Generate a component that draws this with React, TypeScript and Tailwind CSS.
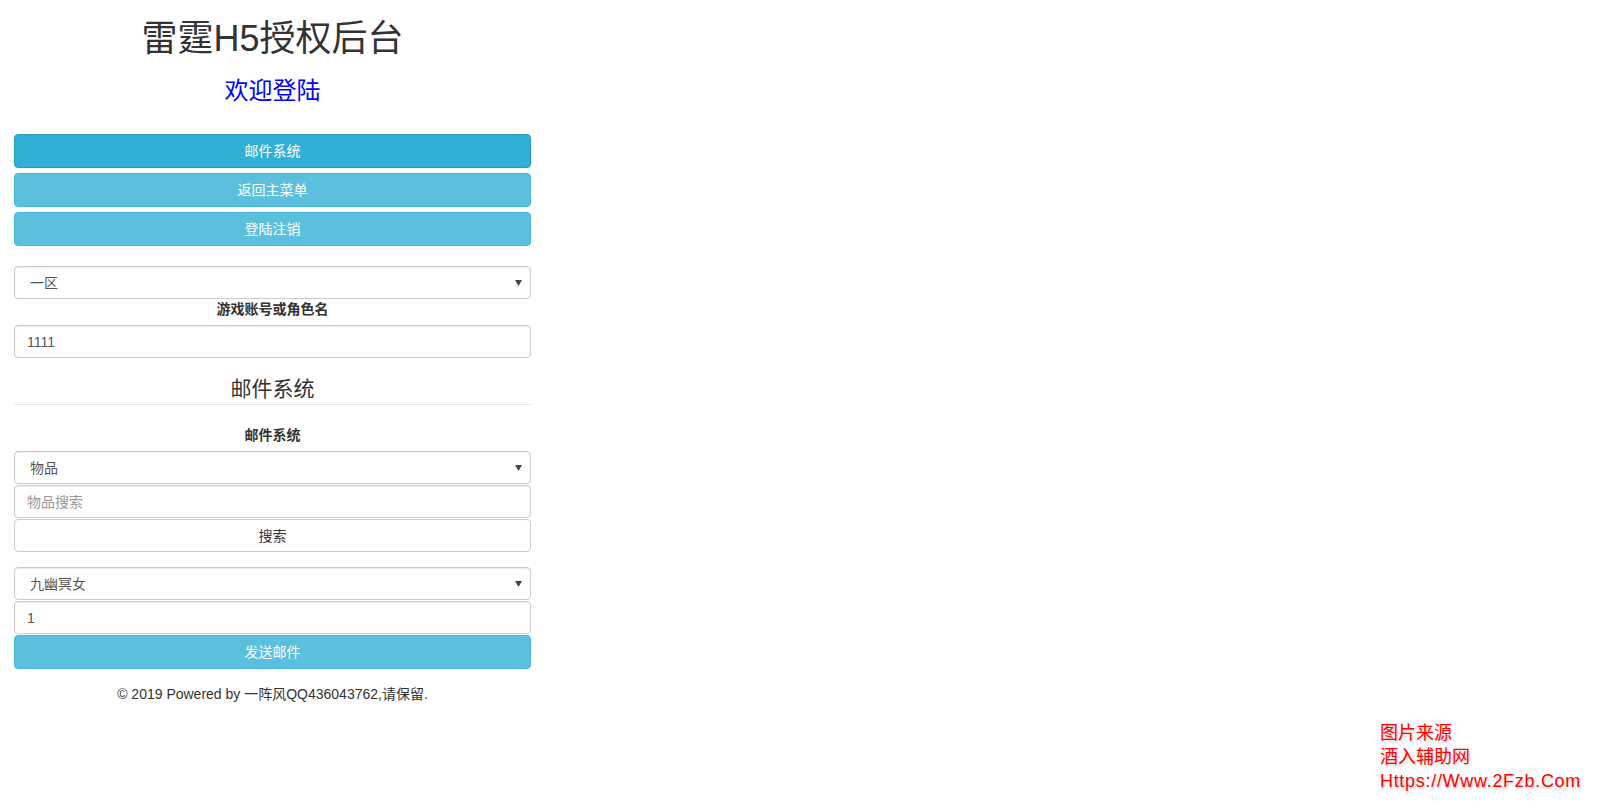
import React from "react";

const font = "font-['Liberation_Sans','Noto_Sans_CJK_SC',sans-serif]";

function Caret() {
  return (
    <svg
      className="pointer-events-none absolute right-[9px] top-1/2 -translate-y-1/2"
      width="7"
      height="6"
      viewBox="0 0 7 6"
    >
      <path d="M0 0 L7 0 L3.5 6 Z" fill="#444" />
    </svg>
  );
}

function Select(props: { value: string; className?: string }) {
  return (
    <div className={"relative " + (props.className ?? "")}>
      <select
        defaultValue={props.value}
        className={`${font} block h-[33px] w-full appearance-none rounded border border-[#ccc] bg-white pl-[15px] text-[14px] leading-[20px] text-[#555] shadow-[inset_0_1px_1px_rgba(0,0,0,0.075)] outline-none`}
      >
        <option>{props.value}</option>
      </select>
      <Caret />
    </div>
  );
}

function Input(props: { value?: string; placeholder?: string; className?: string }) {
  return (
    <input
      defaultValue={props.value}
      placeholder={props.placeholder}
      className={`${font} block h-[33px] w-full rounded border border-[#ccc] bg-white px-3 text-[14px] leading-[20px] text-[#555] placeholder:text-[#999] shadow-[inset_0_1px_1px_rgba(0,0,0,0.075)] outline-none ${props.className ?? ""}`}
    />
  );
}

function InfoButton(props: { label: string; active?: boolean; className?: string }) {
  const colors = props.active
    ? "bg-[#31b0d5] border-[#269abc]"
    : "bg-[#5bc0de] border-[#46b8da]";
  return (
    <button
      className={`${font} block h-[34px] w-full rounded border text-center text-[14px] leading-[20px] text-white ${colors} ${props.className ?? ""}`}
    >
      {props.label}
    </button>
  );
}

export default function App() {
  return (
    <div className={`${font} relative min-h-[807px] w-full bg-white text-[#333]`}>
      <div className="pl-[14px]">
        <div className="flex w-[517px] flex-col">
          <h1 className="mt-[19px] text-center text-[36px] leading-[40px] text-[#333]">
            雷霆H5授权后台
          </h1>
          <h3 className="mt-[19px] text-center text-[24px] leading-[26px] text-[#0000ff]">
            欢迎登陆
          </h3>

          <div className="mt-[30px] flex flex-col gap-[5px]">
            <InfoButton label="邮件系统" active />
            <InfoButton label="返回主菜单" />
            <InfoButton label="登陆注销" />
          </div>

          <Select value="一区" className="mt-[20px]" />
          <div className="h-[20px] text-center text-[14px] font-bold leading-[20px] text-[#333]">
            游戏账号或角色名
          </div>
          <Input value="1111" className="mt-[6px]" />

          <div className="mt-[16px] border-b border-[#e5e5e5] text-center text-[21px] leading-[30px] text-[#333]">
            邮件系统
          </div>

          <div className="mt-[20px] h-[20px] text-center text-[14px] font-bold leading-[20px] text-[#333]">
            邮件系统
          </div>
          <div className="mt-[6px] flex flex-col gap-px">
            <Select value="物品" />
            <Input placeholder="物品搜索" />
            <button className="block h-[33px] w-full rounded border border-[#ccc] bg-white text-center text-[14px] leading-[20px] text-[#333]">
              搜索
            </button>
          </div>

          <div className="mt-[15px] flex flex-col gap-px">
            <Select value="九幽冥女" />
            <Input value="1" />
            <InfoButton label="发送邮件" />
          </div>

          <p className="mt-[15px] text-center text-[14px] leading-[20px] text-[#333]">
            © 2019 Powered by 一阵风QQ436043762,请保留.
          </p>
        </div>
      </div>

      <div className="absolute bottom-[14px] right-[19px] flex flex-col text-[18px] leading-[24px] text-[#ff0000] [text-shadow:1px_2px_3px_rgba(0,0,0,0.2)]">
        <span>图片来源</span>
        <span>酒入辅助网</span>
        <span className="tracking-[0.7px]">Https://Www.2Fzb.Com</span>
      </div>
    </div>
  );
}
